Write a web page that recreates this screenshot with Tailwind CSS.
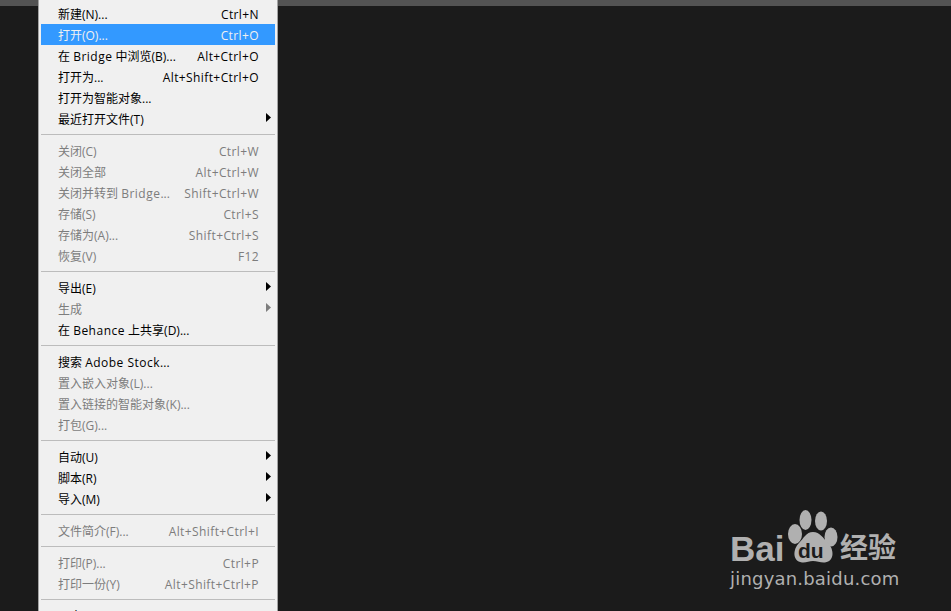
<!DOCTYPE html>
<html lang="zh-CN">
<head>
    <meta charset="UTF-8">
    <title>文件菜单</title>
    <script src="https://cdn.jsdelivr.net/npm/@tailwindcss/browser@4"></script>
</head>
<body class="bg-[#1b1b1b] overflow-hidden font-['Open_Sans','Noto_Sans_CJK_SC',sans-serif]">
    <div class="relative w-[951px] h-[611px] overflow-hidden">
        <div class="h-[6px] bg-[#535353]"></div>

        <!-- File menu -->
        <div id="menu" class="absolute left-[38px] top-0 w-[240px] border-x border-b border-[#a3a3a3] bg-[#f0f0f0] px-[2px] pt-[3px] text-[12px]"></div>

        <!-- Watermark -->
        <div class="absolute left-[730px] top-[508px] w-[180px] h-[84px] text-[#b0b0b0]">
            <span class="absolute left-0 top-[21px] text-[35px] leading-[40px] font-bold font-['Liberation_Sans',sans-serif]">Bai</span>
            <svg class="absolute left-[56px] top-0" width="56" height="58" viewBox="0 0 56 58" fill="currentColor">
                <ellipse cx="19.500" cy="12" rx="6" ry="10"/>
                <ellipse cx="35" cy="13" rx="6" ry="9.500"/>
                <ellipse cx="9" cy="26" rx="7" ry="10"/>
                <ellipse cx="45" cy="29" rx="6.500" ry="9.500"/>
                <path d="M27 24c-7 0-9 6-14 11-6 6-7 18 3 19.500 4 .5 7-1.500 11-1.500s8 2 12 1.500c10-1.500 9-13.500 3-19.500-5-5-8-11-15-11z"/>
            </svg>
            <span class="absolute left-[68px] top-[31px] text-[21px] leading-[24px] font-bold text-[#1b1b1b] font-['Liberation_Sans',sans-serif]">du</span>
            <span class="absolute left-[110px] top-[20px] text-[28px] leading-[36px] font-bold font-['Noto_Sans_CJK_SC',sans-serif]">经验</span>
            <span class="absolute left-0 top-[59px] text-[18px] leading-[24px] tracking-[0.2px] font-['DejaVu_Sans',sans-serif]">jingyan.baidu.com</span>
        </div>
    </div>

    <script>
        const latin = text => `<span class="tracking-[0.5px]">${text}</span>`;

        const groups = [
            [
                { label: '新建(N)...', key: 'Ctrl+N' },
                { label: '打开(O)...', key: 'Ctrl+O', active: true },
                { label: `在 ${latin('Bridge')} 中浏览(B)...`, key: 'Alt+Ctrl+O' },
                { label: '打开为...', key: 'Alt+Shift+Ctrl+O' },
                { label: '打开为智能对象...' },
                { label: '最近打开文件(T)', sub: true }
            ],
            [
                { label: '关闭(C)', key: 'Ctrl+W', off: true },
                { label: '关闭全部', key: 'Alt+Ctrl+W', off: true },
                { label: `关闭并转到 ${latin('Bridge')}...`, key: 'Shift+Ctrl+W', off: true },
                { label: '存储(S)', key: 'Ctrl+S', off: true },
                { label: '存储为(A)...', key: 'Shift+Ctrl+S', off: true },
                { label: '恢复(V)', key: 'F12', off: true }
            ],
            [
                { label: '导出(E)', sub: true },
                { label: '生成', sub: true, off: true },
                { label: `在 ${latin('Behance')} 上共享(D)...` }
            ],
            [
                { label: `搜索 ${latin('Adobe Stock')}...` },
                { label: '置入嵌入对象(L)...', off: true },
                { label: '置入链接的智能对象(K)...', off: true },
                { label: '打包(G)...', off: true }
            ],
            [
                { label: '自动(U)', sub: true },
                { label: '脚本(R)', sub: true },
                { label: '导入(M)', sub: true }
            ],
            [
                { label: '文件简介(F)...', key: 'Alt+Shift+Ctrl+I', off: true }
            ],
            [
                { label: '打印(P)...', key: 'Ctrl+P', off: true },
                { label: '打印一份(Y)', key: 'Alt+Shift+Ctrl+P', off: true }
            ],
            [
                { label: '退出(X)', key: 'Ctrl+Q' }
            ]
        ];

        function createRow(item) {
            const tone = item.active ? 'bg-[#3399ff] text-[#f0f0f0]' : item.off ? 'text-[#7d7d7d]' : 'text-black';
            const arrow = item.sub
                ? '<svg class="absolute right-[4px] top-[5px]" width="5" height="9" viewBox="0 0 5 9" fill="currentColor"><path d="M0 0l5 4.500-5 4.500z"/></svg>'
                : '';
            return `
                <div class="relative flex h-[21px] items-center justify-between pt-[2px] pl-[17px] pr-[16px] whitespace-nowrap ${tone}">
                    <span>${item.label}</span>
                    <span class="tracking-[0.4px]">${item.key || ''}</span>
                    ${arrow}
                </div>
            `;
        }

        document.getElementById('menu').innerHTML = groups
            .map(group => group.map(createRow).join(''))
            .join('<div class="my-[5px] h-px bg-[#bcbcbc]"></div>');
    </script>
</body>
</html>
